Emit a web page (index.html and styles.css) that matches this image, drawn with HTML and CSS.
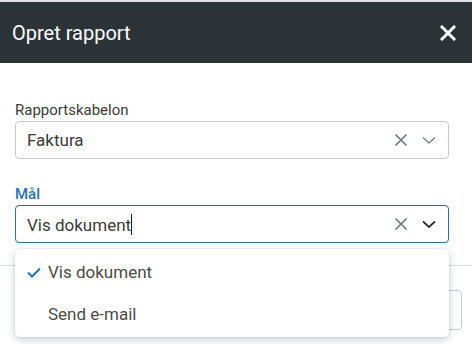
FILE: index.html
```html
<!DOCTYPE html>
<html lang="da">
<head>
  <meta charset="UTF-8">
  <title>Opret rapport</title>
  <link rel="stylesheet" href="styles.css">
</head>
<body>
  <div class="backdrop"></div>
  <div class="dialog">
    <div class="dialog-header">
      <h2>Opret rapport</h2>
      <svg class="close" width="16" height="16" viewBox="0 0 16 16">
        <path d="M2 2 L14 14 M14 2 L2 14" stroke="#fff" stroke-width="3" stroke-linecap="square"/>
      </svg>
    </div>
    <div class="dialog-body">
      <div class="field">
        <label>Rapportskabelon</label>
        <div class="select">
          <span class="select-value">Faktura</span>
          <svg class="clear" width="14" height="14" viewBox="0 0 14 14">
            <path d="M1.5 1.5 L12.5 12.5 M12.5 1.5 L1.5 12.5" stroke="#6b7580" stroke-width="1.6"/>
          </svg>
          <svg class="chevron" width="14" height="10" viewBox="0 0 14 10">
            <path d="M1 2.5 L7 8 L13 2.5" fill="none" stroke="#7a8a9a" stroke-width="1.6"/>
          </svg>
        </div>
      </div>
      <div class="field">
        <label class="active">Mål</label>
        <div class="select focused">
          <span class="select-value">Vis dokument<span class="caret"></span></span>
          <svg class="clear" width="14" height="14" viewBox="0 0 14 14">
            <path d="M1.5 1.5 L12.5 12.5 M12.5 1.5 L1.5 12.5" stroke="#6b7580" stroke-width="1.6"/>
          </svg>
          <svg class="chevron" width="14" height="10" viewBox="0 0 14 10">
            <path d="M1 2.5 L7 8 L13 2.5" fill="none" stroke="#2a3038" stroke-width="1.8"/>
          </svg>
        </div>
        <ul class="menu">
          <li class="selected">
            <svg class="check" width="14" height="11" viewBox="0 0 14 11">
              <path d="M1 5.5 L5 9.5 L13 1.5" fill="none" stroke="#1e73c8" stroke-width="2"/>
            </svg>
            Vis dokument
          </li>
          <li>Send e-mail</li>
        </ul>
      </div>
    </div>
    <div class="dialog-footer">
      <div class="btn"></div>
    </div>
  </div>
</body>
</html>
```
FILE: styles.css
```css
html {
  overflow: hidden;
}
body {
  margin: 0;
  padding: 0;
  min-height: 344px;
  background-color: #fff;
  font-family: Roboto, 'Liberation Sans', Arial, sans-serif;
  color: #333;
}
.backdrop {
  height: 2px;
  background-color: #dfe2e6;
}
.dialog {
  background-color: #fff;
}
.dialog-header {
  height: 61px;
  background-color: #2c3337;
  display: flex;
  align-items: center;
  justify-content: space-between;
  padding: 0 16px 0 12px;
}
.dialog-header h2 {
  margin: 0;
  font-size: 20px;
  font-weight: 400;
  color: #fff;
}
.close {
  display: block;
}
.dialog-body {
  padding: 37px 23px 0 15px;
  display: flex;
  flex-direction: column;
  gap: 25px;
}
.field {
  position: relative;
  display: flex;
  flex-direction: column;
}
.field label {
  font-size: 15px;
  line-height: 20px;
  color: #3a3a3a;
  margin-bottom: 1px;
}
.field label.active {
  color: #1e73c8;
  font-weight: 500;
}
.select {
  box-sizing: border-box;
  height: 38px;
  border: 1px solid #c6c8cc;
  border-radius: 4px;
  display: flex;
  align-items: center;
  padding: 0 12px 0 11px;
  gap: 14px;
}
.select.focused {
  border-color: #1e6fbf;
}
.select-value {
  flex: 1;
  font-size: 17px;
  color: #3a3a3a;
}
.caret {
  display: inline-block;
  width: 1px;
  height: 21px;
  background-color: #222;
  vertical-align: -4px;
}
.menu {
  position: absolute;
  top: 65px;
  left: 0;
  right: 0;
  margin: 0;
  padding: 2px 0;
  list-style: none;
  background-color: #fff;
  border-radius: 5px;
  box-shadow: 0 3px 10px rgba(20, 30, 45, 0.22), 0 0 2px rgba(20, 30, 45, 0.12);
  z-index: 2;
}
.menu li {
  height: 42px;
  display: flex;
  align-items: center;
  padding-left: 33px;
  font-size: 17px;
  color: #4a4a4a;
  position: relative;
}
.menu li.selected .check {
  position: absolute;
  left: 12px;
  top: 16px;
}
.dialog-footer {
  margin-top: 22px;
  border-top: 1px solid #dcdfe3;
  display: flex;
  justify-content: flex-end;
  padding: 24px 10px 0 0;
}
.btn {
  box-sizing: border-box;
  width: 80px;
  height: 40px;
  border: 1px solid #c9ccd0;
  border-radius: 4px;
}
```
